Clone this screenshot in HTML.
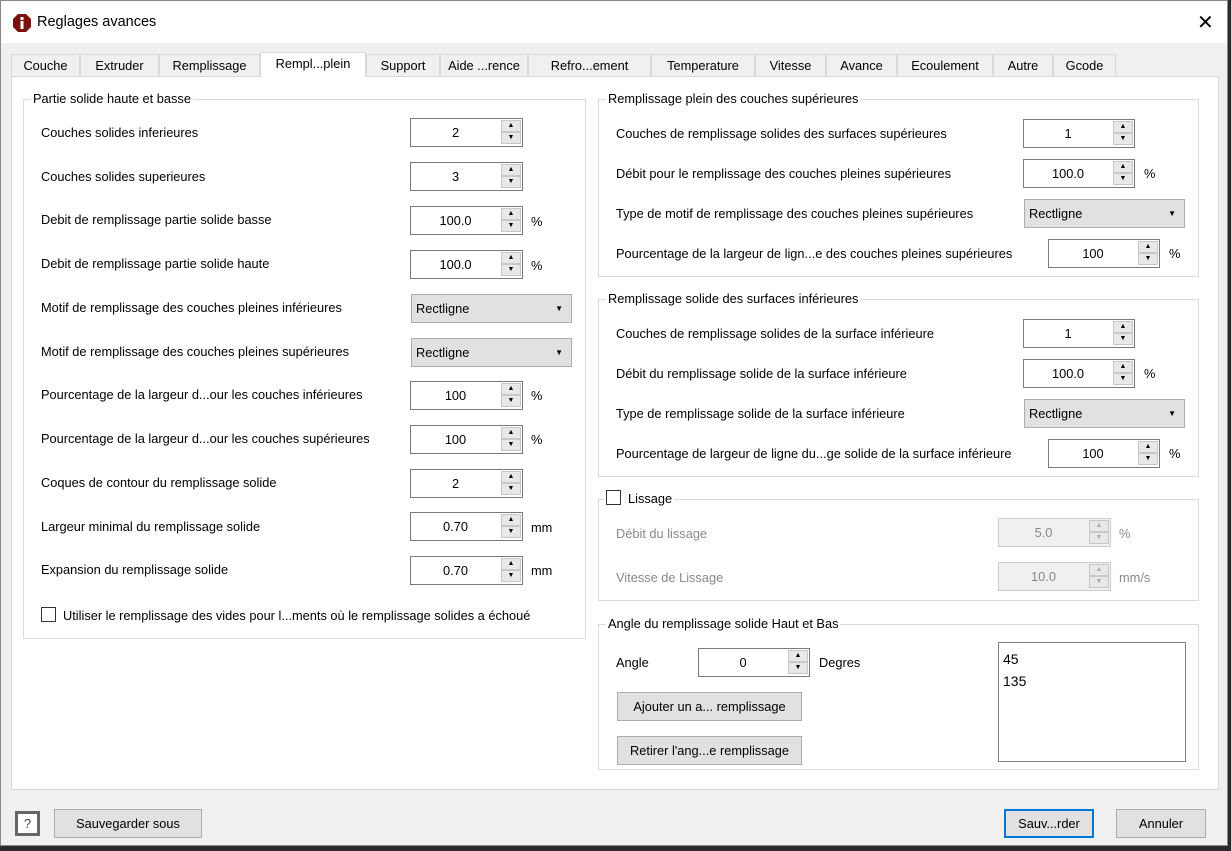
<!DOCTYPE html>
<html><head><meta charset="utf-8"><style>
*{box-sizing:border-box;margin:0;padding:0}
body{width:1231px;height:851px;background:#2b2b2b;font-family:"Liberation Sans",sans-serif;font-size:12.8px;color:#000;position:relative;overflow:hidden}
.win{position:absolute;left:0;top:0;width:1228px;height:846px;background:#f0f0f0;border:1px solid #888}
.title{position:absolute;left:0;top:0;width:100%;height:42px;background:#fff}
.a{position:absolute;white-space:nowrap}
.pane{position:absolute;left:10px;top:75px;width:1208px;height:714px;background:#fff;border:1px solid #d9d9d9}
.tab{position:absolute;top:53px;height:22px;background:#f0f0f0;border:1px solid #d9d9d9;border-bottom:none;text-align:center;line-height:22px}
.grp{position:absolute;border:1px solid #dcdcdc}
.gt{position:absolute;background:#fff;padding:0 2px;white-space:nowrap}
.sp{position:absolute;height:29px;border:1px solid #7a7a7a;background:#fff}
.sp .v{position:absolute;left:0;right:22px;top:0;line-height:27px;text-align:center}
.sp .b{position:absolute;right:1px;width:20px;height:12px;background:#e8e8e8;border:1px solid #c8c8c8;font-size:7px;text-align:center;line-height:10px}
.sp.dis{background:#f0f0f0;border-color:#ccc;color:#888}
.cb{position:absolute;height:29px;background:#e1e1e1;border:1px solid #adadad;line-height:27px;padding-left:4px}
.cb:after{content:"▼";position:absolute;right:8px;top:0;font-size:8px}
.btn{position:absolute;background:#e1e1e1;border:1px solid #adadad;text-align:center}
.chk{position:absolute;width:15px;height:15px;border:1px solid #333;background:#fff}
.g{color:#888}
</style></head><body>
<div class="win">
<div class="title">
<svg style="position:absolute;left:11px;top:12px" width="20" height="20" viewBox="0 0 20 20"><polygon points="6,1 14,1 19,6 19,14 14,19 6,19 1,14 1,6" fill="#7a1010"/><rect x="8.5" y="4" width="3" height="3" fill="#fff"/><rect x="8.5" y="8" width="3" height="8" fill="#fff"/></svg>
<div class="a" style="left:36px;top:13px;font-size:14.5px">Reglages avances</div>
<div class="a" style="left:1196px;top:9px;font-size:20px;font-weight:300">✕</div>
</div>
<div class="pane"></div>
<div class="tab" style="left:10px;width:69px">Couche</div>
<div class="tab" style="left:79px;width:79px">Extruder</div>
<div class="tab" style="left:158px;width:101px">Remplissage</div>
<div class="tab" style="left:259px;top:51px;height:25px;width:106px;background:#fff">Rempl...plein</div>
<div class="tab" style="left:365px;width:74px">Support</div>
<div class="tab" style="left:439px;width:88px">Aide ...rence</div>
<div class="tab" style="left:527px;width:123px">Refro...ement</div>
<div class="tab" style="left:650px;width:104px">Temperature</div>
<div class="tab" style="left:754px;width:71px">Vitesse</div>
<div class="tab" style="left:825px;width:71px">Avance</div>
<div class="tab" style="left:896px;width:96px">Ecoulement</div>
<div class="tab" style="left:992px;width:60px">Autre</div>
<div class="tab" style="left:1052px;width:63px">Gcode</div>

<div class="grp" style="left:22px;top:98px;width:563px;height:540px"></div>
<div class="gt" style="left:30px;top:90px">Partie solide haute et basse</div>
<div class="a" style="left:40px;top:124px">Couches solides inferieures</div>
<div class="a" style="left:40px;top:168px">Couches solides superieures</div>
<div class="a" style="left:40px;top:211px">Debit de remplissage partie solide basse</div>
<div class="a" style="left:40px;top:255px">Debit de remplissage partie solide haute</div>
<div class="a" style="left:40px;top:299px">Motif de remplissage des couches pleines inférieures</div>
<div class="a" style="left:40px;top:343px">Motif de remplissage des couches pleines supérieures</div>
<div class="a" style="left:40px;top:386px">Pourcentage de la largeur d...our les couches inférieures</div>
<div class="a" style="left:40px;top:430px">Pourcentage de la largeur d...our les couches supérieures</div>
<div class="a" style="left:40px;top:474px">Coques de contour du remplissage solide</div>
<div class="a" style="left:40px;top:518px">Largeur minimal du remplissage solide</div>
<div class="a" style="left:40px;top:561px">Expansion du remplissage solide</div>
<div class="chk" style="left:40px;top:606px"></div>
<div class="a" style="left:62px;top:607px">Utiliser le remplissage des vides pour l...ments où le remplissage solides a échoué</div>

<div class="sp" style="left:409px;top:117px;width:113px"><div class="v">2</div><div class="b" style="top:1px">▲</div><div class="b" style="top:13px">▼</div></div>
<div class="sp" style="left:409px;top:161px;width:113px"><div class="v">3</div><div class="b" style="top:1px">▲</div><div class="b" style="top:13px">▼</div></div>
<div class="sp" style="left:409px;top:205px;width:113px"><div class="v">100.0</div><div class="b" style="top:1px">▲</div><div class="b" style="top:13px">▼</div></div><div class="a" style="left:530px;top:213px">%</div>
<div class="sp" style="left:409px;top:249px;width:113px"><div class="v">100.0</div><div class="b" style="top:1px">▲</div><div class="b" style="top:13px">▼</div></div><div class="a" style="left:530px;top:257px">%</div>
<div class="cb" style="left:410px;top:293px;width:161px">Rectligne</div>
<div class="cb" style="left:410px;top:337px;width:161px">Rectligne</div>
<div class="sp" style="left:409px;top:380px;width:113px"><div class="v">100</div><div class="b" style="top:1px">▲</div><div class="b" style="top:13px">▼</div></div><div class="a" style="left:530px;top:387px">%</div>
<div class="sp" style="left:409px;top:424px;width:113px"><div class="v">100</div><div class="b" style="top:1px">▲</div><div class="b" style="top:13px">▼</div></div><div class="a" style="left:530px;top:431px">%</div>
<div class="sp" style="left:409px;top:468px;width:113px"><div class="v">2</div><div class="b" style="top:1px">▲</div><div class="b" style="top:13px">▼</div></div>
<div class="sp" style="left:409px;top:511px;width:113px"><div class="v">0.70</div><div class="b" style="top:1px">▲</div><div class="b" style="top:13px">▼</div></div><div class="a" style="left:530px;top:519px">mm</div>
<div class="sp" style="left:409px;top:555px;width:113px"><div class="v">0.70</div><div class="b" style="top:1px">▲</div><div class="b" style="top:13px">▼</div></div><div class="a" style="left:530px;top:562px">mm</div>

<div class="grp" style="left:597px;top:98px;width:601px;height:178px"></div>
<div class="gt" style="left:605px;top:90px">Remplissage plein des couches supérieures</div>
<div class="a" style="left:615px;top:125px">Couches de remplissage solides des surfaces supérieures</div>
<div class="a" style="left:615px;top:165px">Débit pour le remplissage des couches pleines supérieures</div>
<div class="a" style="left:615px;top:205px">Type de motif de remplissage des couches pleines supérieures</div>
<div class="a" style="left:615px;top:245px">Pourcentage de la largeur de lign...e des couches pleines supérieures</div>
<div class="sp" style="left:1022px;top:118px;width:112px"><div class="v">1</div><div class="b" style="top:1px">▲</div><div class="b" style="top:13px">▼</div></div>
<div class="sp" style="left:1022px;top:158px;width:112px"><div class="v">100.0</div><div class="b" style="top:1px">▲</div><div class="b" style="top:13px">▼</div></div><div class="a" style="left:1143px;top:165px">%</div>
<div class="cb" style="left:1023px;top:198px;width:161px">Rectligne</div>
<div class="sp" style="left:1047px;top:238px;width:112px"><div class="v">100</div><div class="b" style="top:1px">▲</div><div class="b" style="top:13px">▼</div></div><div class="a" style="left:1168px;top:245px">%</div>

<div class="grp" style="left:597px;top:298px;width:601px;height:178px"></div>
<div class="gt" style="left:605px;top:290px">Remplissage solide des surfaces inférieures</div>
<div class="a" style="left:615px;top:325px">Couches de remplissage solides de la surface inférieure</div>
<div class="a" style="left:615px;top:365px">Débit du remplissage solide de la surface inférieure</div>
<div class="a" style="left:615px;top:405px">Type de remplissage solide de la surface inférieure</div>
<div class="a" style="left:615px;top:445px">Pourcentage de largeur de ligne du...ge solide de la surface inférieure</div>
<div class="sp" style="left:1022px;top:318px;width:112px"><div class="v">1</div><div class="b" style="top:1px">▲</div><div class="b" style="top:13px">▼</div></div>
<div class="sp" style="left:1022px;top:358px;width:112px"><div class="v">100.0</div><div class="b" style="top:1px">▲</div><div class="b" style="top:13px">▼</div></div><div class="a" style="left:1143px;top:365px">%</div>
<div class="cb" style="left:1023px;top:398px;width:161px">Rectligne</div>
<div class="sp" style="left:1047px;top:438px;width:112px"><div class="v">100</div><div class="b" style="top:1px">▲</div><div class="b" style="top:13px">▼</div></div><div class="a" style="left:1168px;top:445px">%</div>

<div class="grp" style="left:597px;top:498px;width:601px;height:102px"></div>
<div class="gt" style="left:603px;top:488px;width:70px;height:20px"></div>
<div class="chk" style="left:605px;top:489px"></div>
<div class="a" style="left:627px;top:490px">Lissage</div>
<div class="a g" style="left:615px;top:525px">Débit du lissage</div>
<div class="a g" style="left:615px;top:569px">Vitesse de Lissage</div>
<div class="sp dis" style="left:997px;top:517px;width:113px"><div class="v">5.0</div><div class="b" style="top:1px;color:#aaa">▲</div><div class="b" style="top:13px;color:#aaa">▼</div></div><div class="a g" style="left:1118px;top:525px">%</div>
<div class="sp dis" style="left:997px;top:561px;width:113px"><div class="v">10.0</div><div class="b" style="top:1px;color:#aaa">▲</div><div class="b" style="top:13px;color:#aaa">▼</div></div><div class="a g" style="left:1118px;top:569px">mm/s</div>

<div class="grp" style="left:597px;top:623px;width:601px;height:146px"></div>
<div class="gt" style="left:605px;top:615px">Angle du remplissage solide Haut et Bas</div>
<div class="a" style="left:615px;top:654px">Angle</div>
<div class="sp" style="left:697px;top:647px;width:112px"><div class="v">0</div><div class="b" style="top:1px">▲</div><div class="b" style="top:13px">▼</div></div>
<div class="a" style="left:818px;top:654px">Degres</div>
<div class="btn" style="left:616px;top:691px;width:185px;height:29px;line-height:27px">Ajouter un a... remplissage</div>
<div class="btn" style="left:616px;top:735px;width:185px;height:29px;line-height:27px">Retirer l'ang...e remplissage</div>
<div class="a" style="left:997px;top:641px;width:188px;height:120px;border:1px solid #828282;background:#fff;font-size:14px;padding:5px 4px;line-height:22px">45<br>135</div>

<div class="a" style="left:14px;top:810px;width:25px;height:25px;border:3px solid #666;background:#fff;text-align:center;line-height:19px;color:#444">?</div>
<div class="btn" style="left:53px;top:808px;width:148px;height:29px;line-height:27px">Sauvegarder sous</div>
<div class="btn" style="left:1003px;top:808px;width:90px;height:29px;line-height:25px;border:2px solid #0078d7">Sauv...rder</div>
<div class="btn" style="left:1115px;top:808px;width:90px;height:29px;line-height:27px">Annuler</div>
</div>
</body></html>
